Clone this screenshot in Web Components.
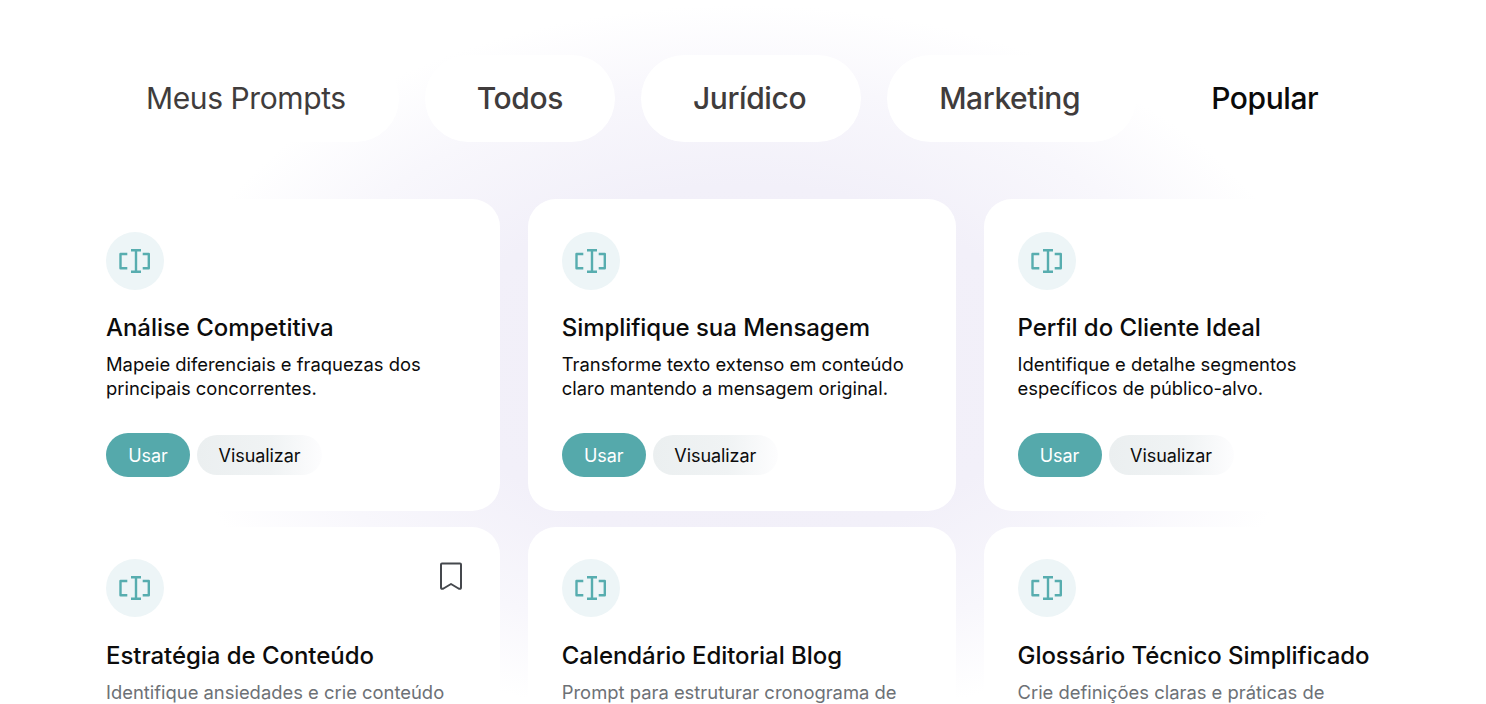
<!DOCTYPE html>
<html lang="pt">
<head>
<meta charset="utf-8">
<title>Prompts</title>
<style>
  html, body { margin: 0; height: 704px; overflow: hidden; }
  body {
    background: radial-gradient(ellipse 580px 360px at 743px 365px, #f1eef8 0%, #f2f0f9 50%, #f8f7fc 78%, #fff 100%) no-repeat, #fff;
    font-family: Inter, "Noto Sans", sans-serif;
  }
  prompt-page { display: block; }
</style>
</head>
<body>
<prompt-page>
  <tab-pill slot="tabs" plain style="--pad-l:52px;--pad-r:53px">Meus Prompts</tab-pill>
  <tab-pill slot="tabs" style="--pad-l:52px;--pad-r:52px">Todos</tab-pill>
  <tab-pill slot="tabs" style="--pad-l:52px;--pad-r:55px">Jurídico</tab-pill>
  <tab-pill slot="tabs" style="--pad-l:52px;--pad-r:56px">Marketing</tab-pill>
  <tab-pill slot="tabs" active style="--pad-l:49px;--pad-r:51px">Popular</tab-pill>

  <prompt-card title="Análise Competitiva">Mapeie diferenciais e fraquezas dos<br>principais concorrentes.</prompt-card>
  <prompt-card title="Simplifique sua Mensagem">Transforme texto extenso em conteúdo<br>claro mantendo a mensagem original.</prompt-card>
  <prompt-card title="Perfil do Cliente Ideal">Identifique e detalhe segmentos<br>específicos de público-alvo.</prompt-card>
  <prompt-card title="Estratégia de Conteúdo" muted saved>Identifique ansiedades e crie conteúdo</prompt-card>
  <prompt-card title="Calendário Editorial Blog" muted>Prompt para estruturar cronograma de</prompt-card>
  <prompt-card title="Glossário Técnico Simplificado" muted>Crie definições claras e práticas de</prompt-card>
</prompt-page>

<script>
class PromptPage extends HTMLElement {
  constructor() {
    super();
    this.attachShadow({ mode: "open" });
    this.shadowRoot.innerHTML = `
      <style>
        :host { display: block; }
        .tabs { display: flex; gap: 26px; padding: 55px 0 0 94px; }
        .grid {
          display: grid;
          grid-template-columns: repeat(3, 427.75px);
          column-gap: 28px;
          row-gap: 16px;
          margin: 57px 0 0 72px;
        }
      </style>
      <div class="tabs"><slot name="tabs"></slot></div>
      <div class="grid"><slot></slot></div>
    `;
  }
}

class TabPill extends HTMLElement {
  constructor() {
    super();
    this.attachShadow({ mode: "open" });
    this.shadowRoot.innerHTML = `
      <style>
        :host {
          display: block;
          height: 87px;
          line-height: 87px;
          padding: 0 var(--pad-r, 53px) 0 var(--pad-l, 53px);
          border-radius: 44px;
          background: #fff;
          font-size: 30px;
          font-weight: 500;
          letter-spacing: -0.4px;
          color: #403c3c;
        }
        :host([plain]) { font-weight: 400; }
        :host([active]) { background: none; color: #0a0a0a; }
      </style>
      <slot></slot>
    `;
  }
}

class PromptCard extends HTMLElement {
  constructor() {
    super();
    this.attachShadow({ mode: "open" });
    this.shadowRoot.innerHTML = `
      <style>
        :host {
          display: block;
          position: relative;
          box-sizing: border-box;
          height: 312px;
          padding: 33px 34px 0;
          border-radius: 28px;
          background: #fff;
          color: #0c0c0c;
        }
        /* second row is cut by the bottom of the window */
        :host([muted]) { height: 177px; border-radius: 28px 28px 0 0; padding-top: 32px; }
        .badge {
          width: 58px;
          height: 58px;
          border-radius: 50%;
          background: #edf5f7;
          display: flex;
          align-items: center;
          justify-content: center;
        }
        h3 {
          margin: 21px 0 0;
          font-size: 24px;
          line-height: 34px;
          font-weight: 500;
          letter-spacing: -0.05px;
        }
        :host([muted]) h3 { margin-top: 22px; }
        p {
          margin: 7px 0 0;
          height: 48px;
          font-size: 18.4px;
          line-height: 24px;
        }
        :host([muted]) p { color: #6d7176; height: 22px; line-height: 22px; margin-top: 8px; }
        :host([muted]) .actions { display: none; }
        .actions { display: flex; align-items: center; gap: 7px; margin-top: 33px; }
        button {
          border: 0;
          font: inherit;
          font-size: 18px;
          letter-spacing: -0.08px;
          border-radius: 22px;
        }
        .use { width: 84px; height: 44px; background: #55a9ab; color: #fff; }
        .view {
          width: 125px;
          height: 40px;
          color: #0c0c0c;
          background: linear-gradient(90deg, #ebeff0 0%, #f0f3f4 60%, #fdfdfe 100%);
        }
        .mark { position: absolute; top: 34px; right: 37px; display: none; }
        :host([saved]) .mark { display: block; }
      </style>
      <div class="badge">
        <svg width="32" height="28" viewBox="0 0 32 28" fill="none" stroke="#57adaf" stroke-width="2.4" stroke-linejoin="round">
          <path d="M8.3 7H1.5V21.2H8.3"/>
          <path d="M12 3.2H22M12 24.8H22M17 3.2V24.8"/>
          <path d="M23.7 7H29.8V21.2H23.7"/>
        </svg>
      </div>
      <h3></h3>
      <p><slot></slot></p>
      <div class="actions">
        <button class="use">Usar</button>
        <button class="view">Visualizar</button>
      </div>
      <svg class="mark" width="24" height="30" viewBox="0 0 24 30" fill="none" stroke="#45484d" stroke-width="2" stroke-linejoin="round">
        <path d="M2 3.5Q2 2.5 3 2.5H21Q22 2.5 22 3.5V26.5Q22 28.5 19.5 27.5L12 23L4.5 27.5Q2 28.5 2 26.5Z"/>
      </svg>
    `;
  }

  connectedCallback() {
    this.shadowRoot.querySelector("h3").textContent = this.getAttribute("title");
  }
}

customElements.define("prompt-page", PromptPage);
customElements.define("tab-pill", TabPill);
customElements.define("prompt-card", PromptCard);
</script>
</body>
</html>
